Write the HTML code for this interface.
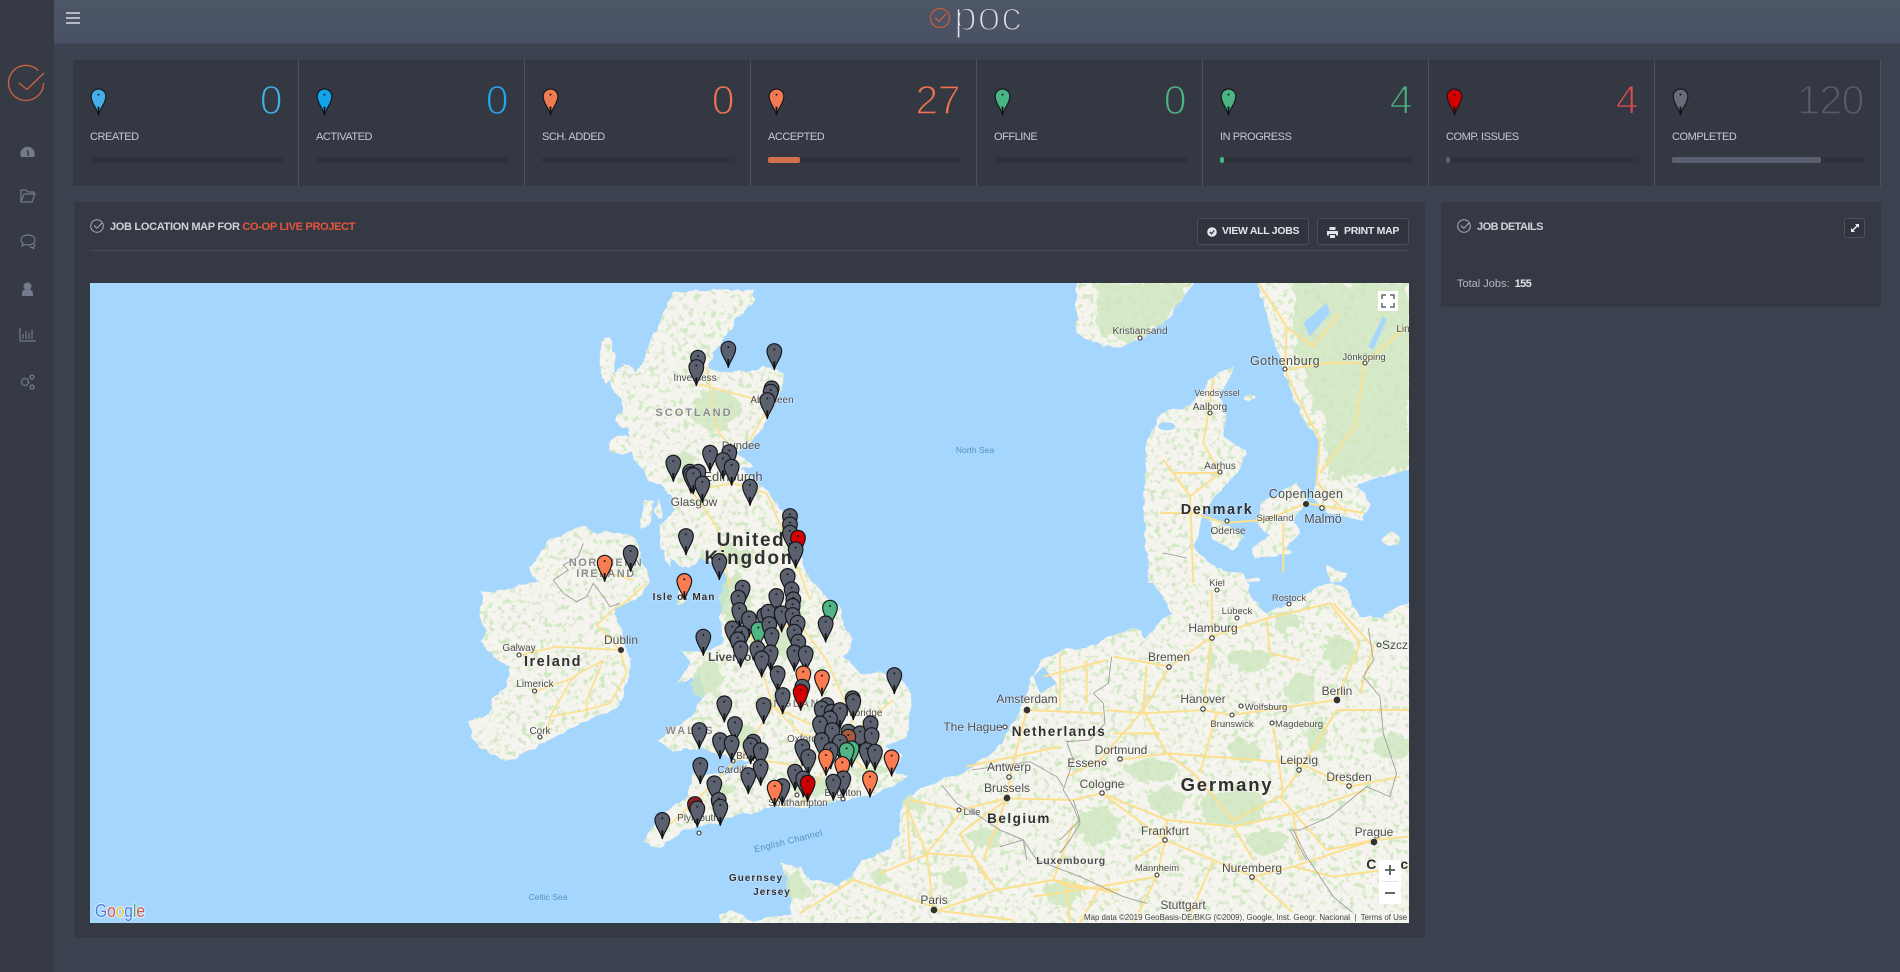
<!DOCTYPE html>
<html><head><meta charset="utf-8"><title>Epoc</title>
<style>
*{box-sizing:border-box;margin:0;padding:0}
html,body{width:1900px;height:972px;overflow:hidden;background:#3c4250;font-family:"Liberation Sans",sans-serif}
.abs{position:absolute}
#side{left:0;top:0;width:54px;height:972px;background:#353a45}
#top{left:54px;top:0;width:1846px;height:44px;background:linear-gradient(#4d5667,#495264);border-bottom:1px solid #444b5a}
.bar{position:absolute;height:2px;width:14px;background:#b4b9c3}
#poc{left:954px;top:-6px;font-size:41px;line-height:44px;color:#dfe2e6;-webkit-text-stroke:2px #4b5466;letter-spacing:.8px}
#stats{left:73px;top:60px;width:1808px;height:126px;background:#343843}
.cell{position:absolute;top:0;width:226px;height:126px;border-right:1px solid #4d5260}
.num{position:absolute;right:16px;top:18px;font-size:41px;line-height:44px;-webkit-text-stroke:1.4px #343843;letter-spacing:-.5px}
.lab{position:absolute;left:17px;top:71px;font-size:11px;line-height:13px;color:#c5c9d1;letter-spacing:-.45px;white-space:nowrap}
.trk{position:absolute;left:17px;top:97px;width:193px;height:6px;background:#2e323c;border-radius:2px}
.fil{position:absolute;left:0;top:0;height:6px;border-radius:2px}
.pn{position:absolute;left:17px;top:27px}
.panel{background:#353944}
#mp{left:74px;top:202px;width:1351px;height:736px}
#jd{left:1441px;top:202px;width:440px;height:105px}
.tt{position:absolute;font-size:11px;line-height:14px;font-weight:bold;color:#cdd1d8;white-space:nowrap;letter-spacing:-.31px}
.tt span{color:#e8553b}
#ln{left:16px;top:48px;width:1319px;height:1px;background:#474c59}
.btn{position:absolute;top:16px;height:27px;border:1px solid #4a4f5c;border-radius:3px;background:#30343e;color:#e3e5e9;font-size:10.5px;font-weight:bold;line-height:25px;white-space:nowrap;letter-spacing:-.3px}
#map{left:90px;top:283px;width:1319px;height:640px}
#map text{font-family:"Liberation Sans",sans-serif;text-anchor:middle;fill:#4c4c4c;paint-order:stroke;stroke:#fff;stroke-opacity:.4;stroke-width:1.2px}
#map text.b{font-weight:bold;fill:#2f2f2f;letter-spacing:1.5px}
#map text.g{font-weight:bold;fill:#8a8a8a;letter-spacing:1.5px;font-size:11px}
#map text.w{fill:#5a8fc4;stroke:none}
.ctl{position:absolute;background:#fff}
#attr{left:1084px;top:912px;width:325px;height:11px;background:rgba(245,245,245,.55);font-size:7.9px;line-height:11px;color:#444;text-align:right;padding-right:5px;white-space:nowrap}
</style></head>
<body>
<svg width="0" height="0" style="position:absolute"><defs>
<g id="p"><path d="M0 0C-3-20-22-35-22-57A22 22 0 1 1 22-57C22-35 3-20 0 0Z" stroke="#15171c" stroke-width="3.5"/><path d="M-3-26L3-26L1.5 0L-1.5 0Z" fill="#111"/><circle cy="-62" r="3" fill="#1a1a1a"/></g>
</defs></svg>

<div id="side" class="abs">
<svg width="54" height="420" style="position:absolute;left:0;top:0" fill="none" stroke="#727a8c" stroke-width="1.2">
<path d="M38.500 70.700A17.500 17.500 0 1 0 43.500 83" stroke="#cf6240" stroke-width="1.300"/>
<path d="M19 83L27 89.500L44 73" stroke="#cf6240" stroke-width="1.300"/>
<path d="M21 157a7.2 7.2 0 1 1 13 0Z" fill="#727a8c" stroke="none"/><path d="M27.500 150l1 6M23 150h.1M32 150h.1M27 147h.1" stroke="#353a45" stroke-width="1.4"/>
<path d="M21 202v-12h5l2 2h6v2M21 202l3-8h11l-3 8Z"/>
<path d="M21 240c0-3 3-5 7-5s7 2 7 5-3 5-7 5c-1 0-2 0-3-.5l-3 1.500 1-2.500c-1-1-2-2-2-3.500Z"/><path d="M30 247l3 1 1 .5-.5-2c1-.7 1.500-1.500 1.800-2.500"/>
<path d="M22 296v-3c0-2 2-3 3-3.500a4 4 0 1 1 5 0c1 .5 3 1.500 3 3.500v3Z" fill="#727a8c" stroke="none"/>
<path d="M20 328v13h16M23 339v-5M26 339v-8M29 339v-6M32 339v-9"/>
<circle cx="25" cy="382" r="3.500" stroke-width="1.800" stroke-dasharray="1.800 .8"/><circle cx="32" cy="377" r="2" stroke-width="1.300"/><circle cx="32" cy="387" r="2" stroke-width="1.300"/>
</svg>
</div>

<div id="top" class="abs">
<div class="bar" style="left:12px;top:12px"></div><div class="bar" style="left:12px;top:17px"></div><div class="bar" style="left:12px;top:22px"></div>
</div>
<svg class="abs" style="left:928px;top:6px" width="24" height="24" fill="none" stroke="#c55c41" stroke-width="1.300"><circle cx="12" cy="12" r="9.500"/><path d="M7 11.500L11 15.500L18 8"/></svg>
<div id="poc" class="abs">poc</div>

<div id="stats" class="abs">
<div class="cell" style="left:0">
<svg class="pn" width="17" height="30" viewBox="-25 -85 50 90" fill="#45aee8"><use href="#p"/></svg>
<div class="num" style="color:#45aee8">0</div><div class="lab">CREATED</div><div class="trk"></div></div>
<div class="cell" style="left:226px">
<svg class="pn" width="17" height="30" viewBox="-25 -85 50 90" fill="#12a5ec"><use href="#p"/></svg>
<div class="num" style="color:#24a8ec">0</div><div class="lab">ACTIVATED</div><div class="trk"></div></div>
<div class="cell" style="left:452px">
<svg class="pn" width="17" height="30" viewBox="-25 -85 50 90" fill="#f27a52"><use href="#p"/></svg>
<div class="num" style="color:#f0744e">0</div><div class="lab">SCH. ADDED</div><div class="trk"></div></div>
<div class="cell" style="left:678px">
<svg class="pn" width="17" height="30" viewBox="-25 -85 50 90" fill="#f27a52"><use href="#p"/></svg>
<div class="num" style="color:#f0744e">27</div><div class="lab">ACCEPTED</div><div class="trk"><div class="fil" style="width:32px;background:#d0704e"></div></div></div>
<div class="cell" style="left:904px">
<svg class="pn" width="17" height="30" viewBox="-25 -85 50 90" fill="#4ab483"><use href="#p"/></svg>
<div class="num" style="color:#4ab483">0</div><div class="lab">OFFLINE</div><div class="trk"></div></div>
<div class="cell" style="left:1130px">
<svg class="pn" width="17" height="30" viewBox="-25 -85 50 90" fill="#4ab483"><use href="#p"/></svg>
<div class="num" style="color:#4ab483">4</div><div class="lab">IN PROGRESS</div><div class="trk"><div class="fil" style="width:4px;background:#4ab483"></div></div></div>
<div class="cell" style="left:1356px">
<svg class="pn" width="17" height="30" viewBox="-25 -85 50 90" fill="#d40000"><use href="#p"/></svg>
<div class="num" style="color:#e04a50">4</div><div class="lab">COMP. ISSUES</div><div class="trk"><div class="fil" style="width:4px;background:#5a6070"></div></div></div>
<div class="cell" style="left:1582px">
<svg class="pn" width="17" height="30" viewBox="-25 -85 50 90" fill="#666c79"><use href="#p"/></svg>
<div class="num" style="color:#555c6a">120</div><div class="lab">COMPLETED</div><div class="trk"><div class="fil" style="width:149px;background:#5a6070"></div></div></div>
</div>

<div id="mp" class="abs panel">
<svg style="position:absolute;left:16px;top:17px" width="14" height="14" fill="none" stroke="#a9aeb9" stroke-width="1"><circle cx="7" cy="7" r="6.300"/><path d="M4 6.500L6.800 9.300L12.500 3.500"/></svg>
<div class="tt" style="left:36px;top:18px">JOB LOCATION MAP FOR <span>CO-OP LIVE PROJECT</span></div>
<div class="btn" style="left:1123px;width:112px;padding-left:24px">VIEW ALL JOBS
<svg style="position:absolute;left:9px;top:8px" width="10" height="10"><circle cx="5" cy="5" r="4.800" fill="#e3e5e9"/><path d="M2.800 5L4.500 6.800L7.300 3.500" fill="none" stroke="#30343e" stroke-width="1.300"/></svg></div>
<div class="btn" style="left:1243px;width:92px;padding-left:26px">PRINT MAP
<svg style="position:absolute;left:9px;top:8px" width="11" height="11" fill="#e3e5e9"><path d="M2.500 0H8.500V3H2.500ZM0 4H11V8.500H9V7H2V8.500H0ZM3 8H8V11H3Z"/></svg></div>
<div id="ln" class="abs"></div>
</div>

<div id="jd" class="abs panel">
<svg style="position:absolute;left:16px;top:17px" width="14" height="14" fill="none" stroke="#a9aeb9" stroke-width="1"><circle cx="7" cy="7" r="6.300"/><path d="M4 6.500L6.800 9.300L12.500 3.500"/></svg>
<div class="tt" style="left:36px;top:18px;letter-spacing:-.55px">JOB DETAILS</div>
<div class="abs" style="left:403px;top:16px;width:21px;height:20px;border:1px solid #4d525f;border-radius:3px;background:#30343e">
<svg style="position:absolute;left:5px;top:4px" width="10" height="10" stroke="#e8eaee" stroke-width="1.500" fill="#e8eaee"><path d="M2 8L8 2"/><path d="M5 1H9V5ZM1 5V9H5Z" stroke="none"/></svg></div>
<div class="abs" style="left:16px;top:75px;font-size:11px;line-height:14px;color:#b4b8c1;white-space:nowrap">Total Jobs: <b style="color:#dfe1e6;font-weight:bold;letter-spacing:-.6px;margin-left:2px">155</b></div>
</div>

<svg id="map" class="abs" viewBox="90 283 1319 640" xmlns="http://www.w3.org/2000/svg">
<defs>
<filter id="tx" filterUnits="userSpaceOnUse" x="90" y="283" width="1319" height="640" color-interpolation-filters="sRGB">
<feTurbulence type="fractalNoise" baseFrequency=".09" numOctaves="3" seed="3" result="t"/>
<feDisplacementMap in="SourceGraphic" in2="t" scale="7" xChannelSelector="R" yChannelSelector="G" result="d"/>
<feTurbulence type="fractalNoise" baseFrequency=".18" numOctaves="3" seed="7"/>
<feColorMatrix values="0 0 0 0 .82  0 0 0 0 .91  0 0 0 0 .77  6 0 0 0 -3.200"/>
<feComposite in2="d" operator="in" result="n"/>
<feMerge><feMergeNode in="d"/><feMergeNode in="n"/></feMerge>
</filter>
<filter id="ds" filterUnits="userSpaceOnUse" x="90" y="283" width="1319" height="640" color-interpolation-filters="sRGB">
<feTurbulence type="fractalNoise" baseFrequency=".07" numOctaves="3" seed="11" result="t"/>
<feDisplacementMap in="SourceGraphic" in2="t" scale="16" xChannelSelector="R" yChannelSelector="G"/>
</filter>
</defs>
<rect x="90" y="283" width="1319" height="640" fill="#a5d6fe"/>
<g filter="url(#tx)" fill="#f6f4ee">
<g transform="translate(640,320) scale(.3333)">
<path d="M96-80L200-90 340-90 345-60 290 0 255 50 215 110 200 150 240 155 320 150 390 140 430 165 425 210 395 270 370 320 330 370 290 400 340 440 300 445 370 500 420 560 445 630 480 700 510 780 560 830 610 900 620 1000 400 1000 270 900 260 800 250 730 180 720 130 745 60 680 60 620 105 570 90 520 30 480-20 420-30 340-50 280-60 210-20 180 20 100 60 0Z"/>
</g>
<g transform="translate(640,600) scale(.3333)">
<path d="M260-20L240 60 250 130 170 160 125 145 150 190 110 250 180 225 195 290 150 350 80 400 55 425 105 455 200 450 280 475 335 480 270 520 160 520 140 590 60 650 10 720 60 745 130 690 175 680 240 665 290 640 340 640 400 620 480 625 540 610 610 600 690 590 790 540 810 530 750 510 790 465 730 440 800 410 810 340 815 280 780 235 720 215 660 225 640 200 610 170 640 115 600 60 600 30 550-20Z"/>
</g>
<g transform="translate(440,500) scale(.3333)">
<path d="M430 75L470 100 530 95 590 120 600 170 630 240 600 290 540 320 525 330 545 390 570 480 565 530 540 620 500 640 400 680 330 720 270 750 200 785 150 760 95 720 85 665 150 640 160 590 200 560 210 500 160 470 120 420 140 400 120 330 130 280 190 270 290 250 270 200 330 120Z"/>
<path d="M710 315L720 250 750 240 745 290 725 315Z"/>
<path d="M600 85L615 0 640 0 630 75ZM640 30L660 0 670 50 655 55Z"/>
<path d="M665 140L680 90 720 80 780 70 800 100 760 180 745 205 700 150 690 205Z"/>
</g>
<ellipse cx="625" cy="382" rx="14" ry="16"/><ellipse cx="622" cy="445" rx="13" ry="9"/><ellipse cx="628" cy="420" rx="12" ry="7"/><ellipse cx="607" cy="360" rx="7" ry="24"/>
<g transform="translate(1080,283) scale(.3333)">
<path d="M-10-10H350L260 110 180 170 120 195 30 175-10 150Z"/>
<path d="M530-10L560 100 610 260 640 350 720 480 710 600 700 640 740 690 850 715 870 660 830 610 900 580 1000 565 1000-10Z"/>
<path d="M205 900L190 690 200 480 240 390 330 370 400 280 465 250 420 340 440 400 430 460 500 510 470 570 420 625 370 690 345 790 400 880 420 900Z"/>
<path d="M390 700L490 760 460 800 400 770Z"/>
<path d="M540 660L650 600 680 650 640 715 660 750 620 790 640 810 520 830 520 790 570 760 530 720Z"/>
<ellipse cx="935" cy="770" rx="25" ry="20"/><ellipse cx="508" cy="345" rx="18" ry="7"/>
</g>
<g transform="translate(900,560) scale(.3333)">
<path d="M20 710L120 670 215 625 290 570 340 490 375 410 400 340 430 300 490 270 590 255 620 235 700 205 740 235 790 175 820 165 760 70 850 0 900 0 1040 50 1055 110 1100 160 1200 110 1290 65 1340 85 1380 170 1440 170 1527 125 1600 125V1200H0V760Z"/>
<ellipse cx="1060" cy="60" rx="22" ry="8"/><path d="M1280 20L1340 40 1330 70 1290 60Z"/>
</g>
<g transform="translate(720,780) scale(.3333)">
<path d="M680-10L590 30 560 70 558 150 500 210 430 240 395 290 360 315 270 300 240 260 180 250 210 310 215 400 100 425 100 440H1300V-10Z"/>
<path d="M0 400L50 390 100 430 0 440Z"/>
</g>
</g>

<g filter="url(#ds)" opacity=".8">
<g fill="#cfe7be">
<ellipse cx="717" cy="410" rx="23" ry="20"/><ellipse cx="680" cy="460" rx="12" ry="12"/><ellipse cx="735" cy="600" rx="13" ry="28"/><ellipse cx="708" cy="680" rx="14" ry="18"/><ellipse cx="785" cy="645" rx="9" ry="16"/><ellipse cx="735" cy="555" rx="16" ry="10"/><ellipse cx="745" cy="735" rx="12" ry="8"/>
<ellipse cx="815" cy="785" rx="30" ry="8"/><ellipse cx="868" cy="770" rx="26" ry="5"/><ellipse cx="725" cy="790" rx="8" ry="5"/>
<path d="M1295 283H1409V470L1330 480 1322 420 1295 350Z"/>
<path d="M1095 283H1190L1165 320 1130 345 1100 335Z"/>
</g>
<g transform="translate(900,560) scale(.3333)" fill="#cfe7be">
<ellipse cx="1050" cy="300" rx="70" ry="35"/><ellipse cx="1200" cy="390" rx="45" ry="45"/><ellipse cx="1320" cy="280" rx="55" ry="45"/><ellipse cx="1160" cy="180" rx="40" ry="30"/><ellipse cx="1040" cy="570" rx="50" ry="32"/><ellipse cx="750" cy="630" rx="80" ry="30"/><ellipse cx="1000" cy="740" rx="95" ry="55"/><ellipse cx="800" cy="720" rx="60" ry="40"/><ellipse cx="590" cy="800" rx="65" ry="55"/><ellipse cx="260" cy="830" rx="45" ry="32"/><ellipse cx="930" cy="300" rx="20" ry="30"/><ellipse cx="1480" cy="560" rx="50" ry="45"/><ellipse cx="1100" cy="850" rx="60" ry="30"/><ellipse cx="40" cy="735" rx="30" ry="25"/><ellipse cx="1250" cy="520" rx="30" ry="45"/>
</g>
<g fill="#cfe7be"><ellipse cx="955" cy="878" rx="14" ry="8"/><ellipse cx="797" cy="885" rx="11" ry="14"/><ellipse cx="880" cy="876" rx="10" ry="7"/><ellipse cx="1062" cy="893" rx="18" ry="12"/></g>
</g>

<g fill="#a5d6fe">
<g transform="translate(1080,283) scale(.3333)"><path d="M670 120L740 60 750 90 690 160Z"/><path d="M865 190L910 100 920 110 880 200Z"/><ellipse cx="260" cy="430" rx="25" ry="12"/></g>
<g transform="translate(900,560) scale(.3333)"><path d="M400 350L430 320 470 370 420 400Z"/></g>
</g>

<g fill="none" stroke="#fce08f" stroke-width="1.700" stroke-linejoin="round">
<g transform="translate(640,600) scale(.3333)" stroke-width="5"><path d="M300 0L340 130 400 320 300 470M400 320L480 400 600 430M600 430L640 360 560 180 470 60M340 130L470 60M400 320L610 420M300 470L480 500 600 440M300 470L170 600 70 690M480 620L600 440M700 530L600 440M600 430L760 300"/></g>
<g transform="translate(640,320) scale(.3333)" stroke-width="5"><path d="M200 140L230 330 290 400M280 490L160 510M280 490L380 520 450 680 510 840M160 520L230 620 270 800M170 190L390 250M390 250L330 360"/></g>
<g transform="translate(440,500) scale(.3333)" stroke-width="5"><path d="M540 450L350 440 240 465M540 450L470 375 530 320M540 450L560 520 510 610 440 630 330 650 320 710M490 480L400 530 330 650M490 480L440 600 440 640M540 320L620 250M510 220L580 240M285 575L410 530"/></g>
<g transform="translate(1080,283) scale(.3333)" stroke-width="6"><path d="M400 285L380 420 370 480 420 570 330 640 340 900M240 690L340 690 430 720 560 710 680 660 850 690M280 570L420 570M250 530L330 640M535 0L620 130 615 260 640 320 720 470 710 600 800 690M615 260L740 240 855 240 980 130M855 240L825 430 720 570M615 130L700 190 780 90M610 720L610 870"/></g>
<g transform="translate(900,560) scale(.3333)" stroke-width="6"><path d="M935 90L935 230 810 320 640 290M935 230L1100 175 1290 130 1380 250 1310 420M810 320L730 450 600 600 500 650M935 230L910 450 995 465 1310 420M1310 450L1527 450M910 450L730 460 620 450M740 320L730 450 800 580 880 640 1000 780 1140 710 1200 630 1310 450M660 600L800 580 1200 610 1350 680 1500 650M605 700L800 780 1000 800 1180 760 1400 690M380 450L610 460M380 450L330 650 320 715 180 750 30 720M480 280L480 440M320 715L520 720M605 700L520 720M605 700L795 840M800 780L795 840 700 900M20 720L30 900M1300 130L1420 260 1380 400M1000 800L1060 900M1140 710L1280 870M1280 870L1420 840 1527 830M1180 760L1200 900M430 350L620 300M200 620L480 560M320 715L250 900M560 300L560 430M1100 175L1110 280 1200 300M640 520L780 520M950 460L900 640M1120 500L1150 700"/></g>
<g transform="translate(720,780) scale(.3333)" stroke-width="6"><path d="M560 80L620 220 640 380M620 220L760 230 830 330 1000 300 1190 340M400 300L640 380M480 280L630 220M720 100L620 220M720 160L800 300M830 330L640 395M860 60L720 160M1060 130L1000 300 1050 320 1200 330M640 390L880 420M240 400L400 300M1040 320L1050 430"/></g>
<g transform="translate(1000,800) scale(.3333)" stroke-width="6"><path d="M495 120L640 180 760 230 880 200 1120 120M640 180L560 370M760 230L880 340M495 120L470 230 400 370M470 230L300 260 100 290M300 260L240 370M880 200L1000 230 1227 200"/></g>
</g>

<g fill="none" stroke="#999" stroke-width=".8">
<g transform="translate(440,500) scale(.3333)" stroke-width="2.500"><path d="M430 130L415 170 370 195 385 210 340 240 370 280 410 305 440 290 460 250 490 290 510 320 540 310"/></g>
<g transform="translate(900,560) scale(.3333)" stroke-width="2.500"><path d="M635 290L625 370 580 400 610 430 615 490 570 540 500 545 520 600 490 690 520 740 540 790 510 840 480 880M215 630L390 605 470 650 490 680M125 675L170 730 240 770 300 810 370 840 380 900M1405 205L1420 300 1390 350 1440 410 1450 520 1490 640 1470 710 1400 680 1290 770 1200 810 1170 810 1220 900"/></g>
<g transform="translate(1000,800) scale(.3333)" stroke-width="2.500"><path d="M0 140L70 120 110 180 240 230 370 290 440 310M180 120L240 60 220 0M880 90L920 170 1000 290 1060 340"/></g>
<g transform="translate(1080,283) scale(.3333)" stroke-width="2.500"><path d="M250 810L320 825"/></g>
</g>

<g font-size="10">
<text x="695" y="381">Inverness</text><text x="772" y="403">Aberdeen</text><text class="g" x="694" y="416" style="letter-spacing:2px">SCOTLAND</text><text x="741" y="449" font-size="11">Dundee</text><text x="733" y="481" font-size="13">Edinburgh</text><text x="694" y="506" font-size="12">Glasgow</text>
<text class="b" x="751" y="546" font-size="19" style="letter-spacing:1.600px">United</text><text class="b" x="752" y="564" font-size="19" style="letter-spacing:1.800px">Kingdom</text><text class="b" x="684" y="600" font-size="10" style="letter-spacing:1px">Isle of Man</text>
<text class="g" x="606" y="566">NORTHERN</text><text class="g" x="606" y="577">IRELAND</text><text x="621" y="644" font-size="12">Dublin</text><text x="519" y="651">Galway</text><text class="b" x="553" y="666" font-size="14.500">Ireland</text><text x="535" y="687">Limerick</text><text x="540" y="734">Cork</text>
<text x="735" y="661" font-size="12" font-weight="bold">Liverpool</text><text class="g" x="797" y="707">ENGLAND</text><text class="g" x="690" y="734" style="letter-spacing:2px">WALES</text><text x="802" y="742">Oxford</text><text x="750" y="759">Bristol</text><text x="732" y="773">Cardiff</text><text x="798" y="806">Southampton</text><text x="843" y="796">Brighton</text><text x="698" y="821">Plymouth</text><text x="858" y="716">Cambridge</text>
<text x="1140" y="334" font-size="10">Kristiansand</text><text x="1285" y="365" font-size="12.500" style="letter-spacing:.4px">Gothenburg</text><text x="1364" y="360" font-size="9.500">Jönköping</text><text x="1217" y="396" font-size="9">Vendsyssel</text><text x="1210" y="410">Aalborg</text><text x="1220" y="469">Aarhus</text><text class="b" x="1217" y="514" font-size="14.500">Denmark</text><text x="1306" y="498" font-size="12.500" style="letter-spacing:.3px">Copenhagen</text><text x="1323" y="523" font-size="12.500">Malmö</text><text x="1275" y="521" font-size="9.500">Sjælland</text><text x="1228" y="534">Odense</text><text x="1403" y="332">Lin</text>
<text x="1217" y="586" font-size="9.500">Kiel</text><text x="1289" y="601" font-size="9.500">Rostock</text><text x="1237" y="614" font-size="9.500">Lübeck</text><text x="1213" y="632" font-size="12">Hamburg</text><text x="1169" y="661" font-size="12">Bremen</text><text x="1395" y="649" font-size="12">Szcz</text><text x="1027" y="703" font-size="12">Amsterdam</text><text x="1203" y="703" font-size="12">Hanover</text><text x="1266" y="710" font-size="9.500">Wolfsburg</text><text x="1337" y="695" font-size="12">Berlin</text><text x="973" y="731" font-size="12">The Hague</text><text class="b" x="1059" y="736" font-size="13.500">Netherlands</text><text x="1232" y="727" font-size="9.500">Brunswick</text><text x="1299" y="727" font-size="9.500">Magdeburg</text><text x="1121" y="754" font-size="12">Dortmund</text><text x="1084" y="767" font-size="12">Essen</text><text x="1009" y="771" font-size="12">Antwerp</text><text x="1299" y="764" font-size="12">Leipzig</text><text x="1102" y="788" font-size="12">Cologne</text><text x="1007" y="792" font-size="12">Brussels</text><text x="1349" y="781" font-size="12">Dresden</text><text class="b" x="1227" y="791" font-size="18.500" style="letter-spacing:1.800px">Germany</text><text class="b" x="1019" y="823" font-size="13.500">Belgium</text><text x="972" y="815" font-size="9.500">Lille</text><text x="1165" y="835" font-size="12">Frankfurt</text><text x="1374" y="836" font-size="12">Prague</text>
<text x="1071" y="864" font-size="10.500" font-weight="bold" style="letter-spacing:.6px">Luxembourg</text><text x="1157" y="871" font-size="9.500">Mannheim</text><text x="1252" y="872" font-size="12">Nuremberg</text><text x="1183" y="909" font-size="12">Stuttgart</text><text class="b" x="1372" y="869" font-size="14">C</text><text class="b" x="1405" y="869" font-size="14">c</text>
<text class="b" x="756" y="881" font-size="10" style="letter-spacing:1px">Guernsey</text><text class="b" x="772" y="895" font-size="10" style="letter-spacing:1px">Jersey</text><text x="934" y="904" font-size="12">Paris</text>
<text class="w" x="788" y="844" transform="rotate(-14 788 840)" font-size="9" style="letter-spacing:.3px">English Channel</text><text class="w" x="548" y="900" font-size="8.500">Celtic Sea</text><text class="w" x="975" y="453" font-size="8.500">North Sea</text>
</g>

<g fill="#fff" stroke="#333" stroke-width="1.100">
<circle cx="519" cy="655" r="2"/><circle cx="534.500" cy="691" r="2"/><circle cx="540" cy="737" r="2"/><circle cx="621" cy="650" r="2.500" fill="#333"/><circle cx="699" cy="833" r="2"/><circle cx="797" cy="795" r="2"/><circle cx="843" cy="799" r="2"/><circle cx="733" cy="761" r="2"/>
<circle cx="1140" cy="338" r="2"/><circle cx="1285" cy="369" r="2"/><circle cx="1365" cy="363" r="2"/><circle cx="1210" cy="413" r="2"/><circle cx="1220" cy="472" r="2"/><circle cx="1227" cy="521" r="2"/><circle cx="1306" cy="504" r="2.500" fill="#333"/><circle cx="1322" cy="508" r="2.200"/>
<circle cx="1217" cy="590" r="2"/><circle cx="1289" cy="604" r="2"/><circle cx="1237" cy="618" r="2"/><circle cx="1212" cy="638" r="2.200"/><circle cx="1169" cy="667" r="2.200"/><circle cx="1379" cy="645" r="2"/><circle cx="1027" cy="710" r="2.800" fill="#333"/><circle cx="1203" cy="709" r="2.200"/><circle cx="1241" cy="706" r="2"/><circle cx="1232" cy="715" r="2"/><circle cx="1272" cy="723" r="2"/><circle cx="1337" cy="700" r="2.800" fill="#333"/><circle cx="1005" cy="727" r="2"/><circle cx="1104" cy="763" r="2"/><circle cx="1120" cy="759" r="2.200"/><circle cx="1009" cy="777" r="2.200"/><circle cx="1299" cy="770" r="2.200"/><circle cx="1102" cy="793" r="2.200"/><circle cx="1007" cy="798" r="2.800" fill="#333"/><circle cx="1349" cy="786" r="2.200"/><circle cx="959" cy="810" r="2"/><circle cx="1165" cy="840" r="2.200"/><circle cx="1374" cy="842" r="2.800" fill="#333"/><circle cx="1157" cy="875" r="2"/><circle cx="1252" cy="877" r="2.200"/><circle cx="934" cy="910" r="2.800" fill="#333"/>
</g>

<g transform="translate(440,500) scale(.3333)" fill="#5a606e">
<use href="#p" x="572" y="215"/><use href="#p" x="494" y="245" fill="#fb7c50"/>
</g>
<g transform="translate(640,320) scale(.3333)" fill="#5a606e">
<use href="#p" x="174" y="170"/><use href="#p" x="169" y="198"/><use href="#p" x="265" y="143"/><use href="#p" x="403" y="150"/><use href="#p" x="395" y="262"/><use href="#p" x="392" y="272"/><use href="#p" x="382" y="297"/><use href="#p" x="100" y="485"/><use href="#p" x="210" y="455"/><use href="#p" x="268" y="453"/><use href="#p" x="249" y="477"/><use href="#p" x="275" y="497"/><use href="#p" x="150" y="512"/><use href="#p" x="175" y="512"/><use href="#p" x="153" y="520"/><use href="#p" x="160" y="522"/><use href="#p" x="187" y="548"/><use href="#p" x="330" y="557"/><use href="#p" x="450" y="645"/><use href="#p" x="450" y="670"/><use href="#p" x="450" y="695"/><use href="#p" x="474" y="710" fill="#d40000"/><use href="#p" x="467" y="745"/><use href="#p" x="138" y="705"/><use href="#p" x="238" y="780"/><use href="#p" x="133" y="840" fill="#fb7c50"/><use href="#p" x="443" y="825"/><use href="#p" x="455" y="865"/><use href="#p" x="308" y="860"/><use href="#p" x="295" y="890"/><use href="#p" x="409" y="885"/><use href="#p" x="460" y="895"/><use href="#p" x="458" y="915"/><use href="#p" x="570" y="920" fill="#4fb585"/>
</g>
<g transform="translate(640,600) scale(.3333)" fill="#5a606e">
<use href="#p" x="298" y="87"/><use href="#p" x="327" y="112"/><use href="#p" x="373" y="102"/><use href="#p" x="385" y="92"/><use href="#p" x="425" y="97"/><use href="#p" x="458" y="102"/><use href="#p" x="473" y="125"/><use href="#p" x="277" y="142"/><use href="#p" x="305" y="157"/><use href="#p" x="293" y="175"/><use href="#p" x="355" y="145" fill="#4fb585"/><use href="#p" x="388" y="129"/><use href="#p" x="395" y="162"/><use href="#p" x="463" y="152"/><use href="#p" x="475" y="182"/><use href="#p" x="302" y="202"/><use href="#p" x="352" y="202"/><use href="#p" x="392" y="214"/><use href="#p" x="463" y="214"/><use href="#p" x="497" y="217"/><use href="#p" x="365" y="232"/><use href="#p" x="413" y="277"/><use href="#p" x="557" y="127"/><use href="#p" x="190" y="167"/><use href="#p" x="490" y="277" fill="#fb7c50"/><use href="#p" x="546" y="289" fill="#fb7c50"/><use href="#p" x="428" y="342"/><use href="#p" x="253" y="367"/><use href="#p" x="371" y="372"/><use href="#p" x="487" y="317"/><use href="#p" x="482" y="332" fill="#d40000"/><use href="#p" x="638" y="352"/><use href="#p" x="640" y="360"/><use href="#p" x="763" y="282"/><use href="#p" x="560" y="372"/><use href="#p" x="545" y="382"/><use href="#p" x="575" y="392"/><use href="#p" x="600" y="387"/><use href="#p" x="570" y="412"/><use href="#p" x="540" y="427"/><use href="#p" x="577" y="447"/><use href="#p" x="625" y="452"/><use href="#p" x="660" y="457"/><use href="#p" x="692" y="427"/><use href="#p" x="695" y="462"/><use href="#p" x="625" y="467" fill="#a85a3c"/><use href="#p" x="600" y="482"/><use href="#p" x="545" y="477"/><use href="#p" x="487" y="497"/><use href="#p" x="505" y="527"/><use href="#p" x="572" y="507"/><use href="#p" x="680" y="507"/><use href="#p" x="705" y="512"/><use href="#p" x="635" y="502" fill="#4fb585"/><use href="#p" x="620" y="507" fill="#4fb585"/><use href="#p" x="558" y="527" fill="#fb7c50"/><use href="#p" x="607" y="549" fill="#fb7c50"/><use href="#p" x="755" y="529" fill="#fb7c50"/><use href="#p" x="178" y="447"/><use href="#p" x="285" y="429"/><use href="#p" x="240" y="477"/><use href="#p" x="275" y="485"/><use href="#p" x="340" y="482"/><use href="#p" x="332" y="492"/><use href="#p" x="362" y="507"/><use href="#p" x="181" y="552"/><use href="#p" x="362" y="557"/><use href="#p" x="325" y="582"/><use href="#p" x="223" y="607"/><use href="#p" x="465" y="572"/><use href="#p" x="490" y="592"/><use href="#p" x="427" y="615"/><use href="#p" x="404" y="620" fill="#fb7c50"/><use href="#p" x="610" y="592"/><use href="#p" x="580" y="602"/><use href="#p" x="690" y="592" fill="#fb7c50"/><use href="#p" x="503" y="605" fill="#c80000"/><use href="#p" x="165" y="669" fill="#8c1f1f"/><use href="#p" x="236" y="657"/><use href="#p" x="241" y="677"/><use href="#p" x="172" y="682"/><use href="#p" x="67" y="717"/>
</g>
</svg>

<svg class="abs" style="left:95px;top:901px" width="56" height="20"><text x="0" y="16" font-family="Liberation Sans,sans-serif" font-size="18" stroke="#fff" stroke-opacity=".6" stroke-width="2" paint-order="stroke" textLength="50" lengthAdjust="spacingAndGlyphs"><tspan fill="#4f80e0">G</tspan><tspan fill="#d9534a">o</tspan><tspan fill="#eec23c">o</tspan><tspan fill="#4f80e0">g</tspan><tspan fill="#4fa85c">l</tspan><tspan fill="#d9534a">e</tspan></text></svg>
<div class="ctl" style="left:1378px;top:291px;width:20px;height:20px">
<svg width="20" height="20" fill="none" stroke="#666" stroke-width="1.500" style="position:absolute;left:0;top:0"><path d="M4 8V4H8M12 4H16V8M16 12V16H12M8 16H4V12"/></svg></div>
<div class="ctl" style="left:1379px;top:860px;width:22px;height:44px;border-radius:1px">
<svg width="22" height="44" style="position:absolute;left:0;top:0" stroke="#666"><path d="M6 10H16M11 5V15" stroke-width="2"/><path d="M3 21.500H19" stroke="#e3e3e3"/><path d="M6 33H16" stroke-width="2"/></svg></div>
<div id="attr" class="abs">Map data ©2019 GeoBasis-DE/BKG (©2009), Google, Inst. Geogr. Nacional &nbsp;|&nbsp; Terms of Use</div>
</body></html>
